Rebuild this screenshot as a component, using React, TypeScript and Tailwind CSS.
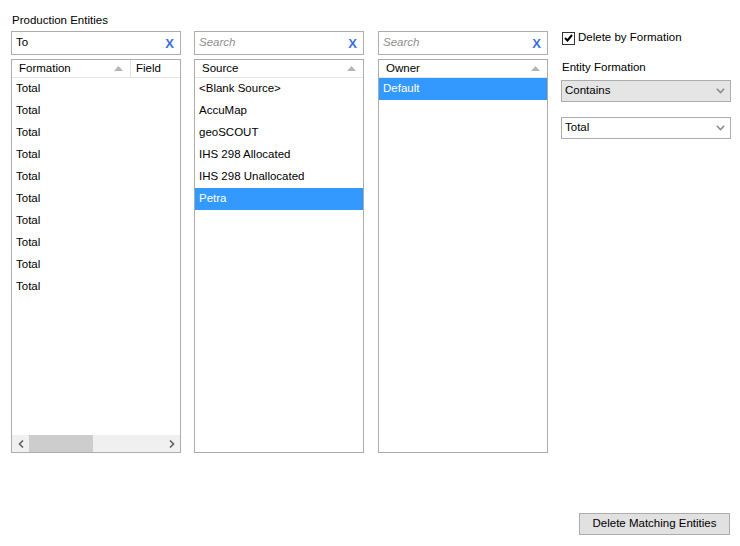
import React from 'react';

const font = { fontFamily: '"Liberation Sans", Arial, sans-serif' };

function SearchBox({ value }: { value?: string }) {
  return (
    <div className="h-[24px] border border-[#abadb3] bg-white flex items-center pl-[4px] pr-[6px]">
      {value ? (
        <span className="flex-1 text-[11.5px] text-black">{value}</span>
      ) : (
        <span className="flex-1 text-[11.5px] italic text-[#8d8d8d]">Search</span>
      )}
      <span className="text-[13px] font-bold text-[#3b6fe0] leading-none">X</span>
    </div>
  );
}

function SortArrow() {
  return (
    <svg width="9" height="5" viewBox="0 0 9 5">
      <path d="M0 5 L4.5 0 L9 5 Z" fill="#b5b5b5" />
    </svg>
  );
}

function ListBox({
  header,
  rows,
  selected,
  extraColumn,
}: {
  header: string;
  rows: string[];
  selected?: number;
  extraColumn?: string;
}) {
  return (
    <div className="mt-[4px] h-[394px] border border-[#acacac] bg-white flex flex-col overflow-hidden">
      <div className="h-[18px] flex items-center border-b border-[#e5e5e5] text-[11.5px] shrink-0">
        <div className={`flex items-center pl-[7px] pr-[7px] h-full ${extraColumn ? 'w-[119px] border-r border-[#e5e5e5]' : 'flex-1'}`}>
          <span className="flex-1">{header}</span>
          <SortArrow />
        </div>
        {extraColumn && <div className="pl-[5px]">{extraColumn}</div>}
      </div>
      <div className="flex-1">
        {rows.map((r, i) => (
          <div
            key={i}
            className={`h-[22px] flex items-center pl-[4px] text-[11.5px] ${i === selected ? 'bg-[#3399ff] text-white' : 'text-black'}`}
          >
            {r}
          </div>
        ))}
      </div>
      {extraColumn && (
        <div className="h-[17px] bg-[#f0f0f0] flex items-center shrink-0">
          <span className="w-[17px] flex justify-center">
            <svg width="6" height="8" viewBox="0 0 6 8"><path d="M5 0.5 L1.5 4 L5 7.5" stroke="#606060" strokeWidth="1.6" fill="none" /></svg>
          </span>
          <div className="w-[64px] h-full bg-[#cdcdcd]" />
          <div className="flex-1" />
          <span className="w-[17px] flex justify-center">
            <svg width="6" height="8" viewBox="0 0 6 8"><path d="M1 0.5 L4.5 4 L1 7.5" stroke="#606060" strokeWidth="1.6" fill="none" /></svg>
          </span>
        </div>
      )}
    </div>
  );
}

function Chevron() {
  return (
    <svg width="9" height="6" viewBox="0 0 9 6">
      <path d="M0.8 0.8 L4.5 4.6 L8.2 0.8" stroke="#8a8a8a" strokeWidth="1.5" fill="none" />
    </svg>
  );
}

export default function App() {
  const totals = Array.from({ length: 10 }, () => 'Total');
  return (
    <div className="w-[740px] h-[546px] bg-white text-black relative" style={font}>
      <div className="pt-[13px] pl-[12px] text-[11.5px] leading-[14px]">Production Entities</div>
      <div className="flex pl-[11px] pt-[4px]">
        <div className="w-[170px]">
          <SearchBox value="To" />
          <ListBox header="Formation" rows={totals} extraColumn="Field" />
        </div>
        <div className="w-[170px] ml-[13px]">
          <SearchBox />
          <ListBox
            header="Source"
            rows={['<Blank Source>', 'AccuMap', 'geoSCOUT', 'IHS 298 Allocated', 'IHS 298 Unallocated', 'Petra']}
            selected={5}
          />
        </div>
        <div className="w-[170px] ml-[14px]">
          <SearchBox />
          <ListBox header="Owner" rows={['Default']} selected={0} />
        </div>
        <div className="w-[170px] ml-[13px] text-[11.5px]">
          <div className="flex items-center h-[14px] pl-[1px]">
            <div className="w-[13px] h-[13px] border border-[#333] bg-white flex items-center justify-center">
              <svg width="9" height="8" viewBox="0 0 9 8">
                <path d="M1 4 L3.5 6.5 L8 1" stroke="#000" strokeWidth="2" fill="none" />
              </svg>
            </div>
            <span className="ml-[3px]">Delete by Formation</span>
          </div>
          <div className="mt-[15px] pl-[1px] leading-[14px]">Entity Formation</div>
          <div className="mt-[6px] h-[22px] border border-[#acacac] bg-[#e5e5e5] flex items-center pl-[3px] pr-[5px]">
            <span className="flex-1">Contains</span>
            <Chevron />
          </div>
          <div className="mt-[15px] h-[22px] border border-[#acacac] bg-white flex items-center pl-[3px] pr-[5px]">
            <span className="flex-1">Total</span>
            <Chevron />
          </div>
        </div>
      </div>
      <div className="flex justify-end pr-[10px] mt-[60px]">
        <button className="w-[151px] h-[22px] border border-[#adadad] bg-[#e1e1e1] text-[11.5px]">
          Delete Matching Entities
        </button>
      </div>
    </div>
  );
}
